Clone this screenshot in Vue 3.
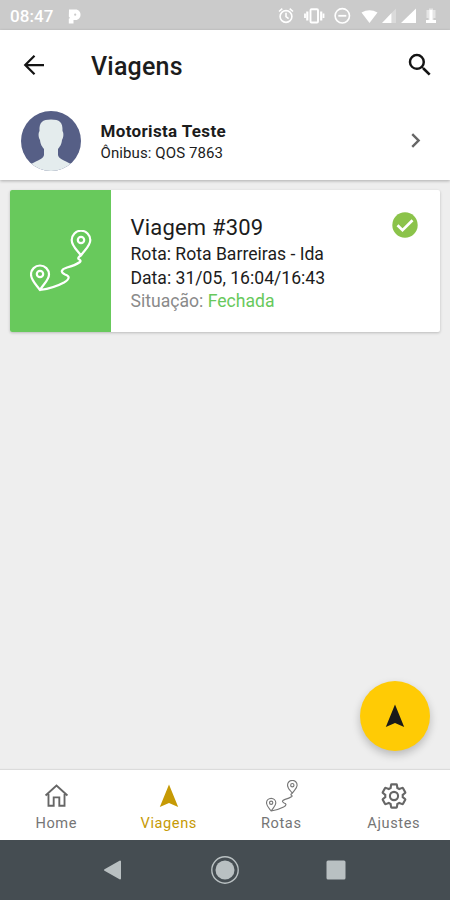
<template>
  <div class="screen">
    <div class="status-bar">
      <span class="clock">08:47</span>
      <svg class="parking" viewBox="0 0 13 15">
        <path fill-rule="evenodd" d="M1 .5H7.500C14.200 .5 14.200 11 7.500 11H5.500V14.500H.8V9.800L2 9L.8 7.500ZM7.200 4.600A1.100 1.100 0 1 0 7.200 6.800A1.100 1.100 0 1 0 7.200 4.600Z" />
      </svg>
      <svg class="status-icons" viewBox="0 0 180 30">
        <g fill="none" stroke="#fff" stroke-width="1.600">
          <circle cx="16" cy="16.500" r="5.900" />
          <path d="M16 12.800V16.700L18.600 18.600M9 11.500L12.300 8.700M23 11.500L19.700 8.700" />
          <rect x="40.500" y="9.200" width="7.500" height="13.300" rx="1" stroke-width="1.900" />
          <path d="M37.300 11.500V20.500M51.200 11.500V20.500" stroke-width="2.200" />
          <path d="M35 13.500V18M53.500 13.500V18" stroke-width="1.800" />
          <circle cx="72.300" cy="15.800" r="7.200" />
          <path d="M68.300 15.800H76.300" stroke-width="1.800" />
        </g>
        <g fill="#fff">
          <path d="M99.500 23L91.500 12.500Q99.500 8 107.500 12.500Z" />
          <path d="M112 23L121.500 13V23Z" />
          <path d="M121.500 13L126 8.500V23H121.500Z" opacity=".3" />
          <path d="M131 23L146 8.500V23Z" />
          <path d="M159 8.500H163V10H165.500V18H163.500V20H166V23H156V20H158.500V18H156.500V10H159Z" opacity=".5" />
          <path d="M159.500 10H162.500V20H166V23H156V20H159.500Z" />
        </g>
      </svg>
    </div>

    <header class="top">
      <div class="app-bar">
        <svg class="back" viewBox="0 0 24 24">
          <path d="M20 12H5.500M12.400 4.600L5 12L12.400 19.400" />
        </svg>
        <h1 class="page-title">Viagens</h1>
        <svg class="search" viewBox="0 0 24 24">
          <path d="M15.500 14h-.79l-.28-.27A6.471 6.471 0 0 0 16 9.500 6.500 6.500 0 1 0 9.500 16c1.610 0 3.090-.59 4.230-1.570l.27.28v.79l5 4.990L20.490 19l-4.990-5zm-6 0C7.010 14 5 11.990 5 9.500S7.010 5 9.500 5 14 7.010 14 9.500 11.990 14 9.500 14z" />
        </svg>
      </div>

      <div class="driver">
        <svg class="avatar" viewBox="0 0 60 60">
          <defs>
            <clipPath id="avatarClip"><circle cx="30" cy="30" r="30" /></clipPath>
          </defs>
          <g clip-path="url(#avatarClip)">
            <rect width="60" height="60" fill="#565f86" />
            <path fill="#e4eced" d="M30 8.500C21.500 8.500 18 11 18.500 20C17 22 17.500 27 19 29C19.500 34 21.500 36 23 38V44C22.500 48 17 49 10 53V60H50V53C43 49 37.500 48 37 44V38C38.500 36 40.500 34 41 29C42.500 27 43 22 41.500 20C42 11 38.500 8.500 30 8.500Z" />
          </g>
        </svg>
        <div class="driver-info">
          <strong class="driver-name">{{ driver.name }}</strong>
          <span class="driver-bus">Ônibus: {{ driver.bus }}</span>
        </div>
        <svg class="chevron" viewBox="0 0 24 24">
          <path d="M10 6L8.590 7.410 13.170 12l-4.580 4.590L10 18l6-6z" />
        </svg>
      </div>
    </header>

    <main class="content">
      <article class="trip">
        <div class="trip-thumb">
          <svg class="route" viewBox="0 0 62 62">
            <path d="M51 25.500C47 20 41.700 16 41.700 10A9.300 9.300 0 0 1 60.300 10C60.300 16 54.500 20 51 25.500ZM10 60C6 54.500 1 50 1 44.500A9 9 0 0 1 19 44.500C19 50 13.500 54 10 60ZM10 60Q24 58 34 52.500C40 49 40 46 35 44.500C30 42 31 39.500 37 37.500Q45 35.500 50 32Q51.500 30.500 48.500 29Q47.500 27.500 51 25.500" />
            <circle cx="51" cy="10" r="3.200" />
            <circle cx="10" cy="44" r="3.200" />
          </svg>
        </div>
        <div class="trip-info">
          <h2 class="trip-title">Viagem #{{ trip.id }}</h2>
          <p class="route-name">Rota: {{ trip.route }}</p>
          <p class="date">Data: {{ trip.date }}</p>
          <p class="situation">Situação: <span class="closed">{{ trip.status }}</span></p>
        </div>
        <svg class="check" viewBox="0 0 26 26">
          <circle cx="13" cy="13" r="12.700" fill="#8bc34a" />
          <path d="M5.500 13.300L10.500 18.200L20.500 8.200" fill="none" stroke="#fff" stroke-width="2.700" />
        </svg>
      </article>

      <button class="fab" aria-label="Iniciar viagem">
        <svg viewBox="0 0 20 24"><path d="M10 .5L19.200 23L10 19L.8 23Z" /></svg>
      </button>
    </main>

    <nav class="tabs">
      <a v-for="tab in tabs" :key="tab.name" class="tab" :class="{ active: tab.name === 'Viagens' }">
        <span class="tab-icon">
          <svg v-if="tab.icon === 'home'" class="home" viewBox="0 0 24 24">
            <path d="M1.500 12L12 2.500L22.500 12M4.300 10.500V21.800H9.300V13.800H14.700V21.800H19.700V10.500" />
          </svg>
          <svg v-else-if="tab.icon === 'arrow'" class="arrow" viewBox="0 0 20 24">
            <path d="M10 .5L19.200 23L10 19L.8 23Z" />
          </svg>
          <svg v-else-if="tab.icon === 'route'" class="route small" viewBox="0 0 62 62">
            <path d="M51 25.500C47 20 41.700 16 41.700 10A9.300 9.300 0 0 1 60.300 10C60.300 16 54.500 20 51 25.500ZM10 60C6 54.500 1 50 1 44.500A9 9 0 0 1 19 44.500C19 50 13.500 54 10 60ZM10 60Q24 58 34 52.500C40 49 40 46 35 44.500C30 42 31 39.500 37 37.500Q45 35.500 50 32Q51.500 30.500 48.500 29Q47.500 27.500 51 25.500" />
            <circle cx="51" cy="10" r="3.200" />
            <circle cx="10" cy="44" r="3.200" />
          </svg>
          <svg v-else class="gear" viewBox="0 0 24 24">
            <path d="M19.430 12.980c.04-.32.07-.64.07-.98s-.03-.66-.07-.98l2.110-1.650c.19-.15.24-.42.12-.64l-2-3.460c-.12-.22-.39-.3-.61-.22l-2.490 1c-.52-.4-1.080-.73-1.690-.98l-.38-2.650A.488.488 0 0 0 14 2h-4c-.25 0-.46.18-.49.42l-.38 2.650c-.61.25-1.170.59-1.690.98l-2.490-1c-.23-.09-.49 0-.61.22l-2 3.460c-.13.22-.07.49.12.64l2.110 1.650c-.04.32-.07.65-.07.98s.03.66.07.98l-2.110 1.650c-.19.15-.24.42-.12.64l2 3.460c.12.22.39.3.61.22l2.490-1c.52.4 1.080.73 1.690.98l.38 2.650c.03.24.24.42.49.42h4c.25 0 .46-.18.49-.42l.38-2.650c.61-.25 1.170-.59 1.690-.98l2.490 1c.23.09.49 0 .61-.22l2-3.460c.12-.22.07-.49-.12-.64z" />
            <circle cx="12" cy="12" r="3.500" />
          </svg>
        </span>
        <span class="tab-label">{{ tab.name }}</span>
      </a>
    </nav>

    <div class="system-nav">
      <svg viewBox="0 0 30 30">
        <path d="M6 15L21 6.500V23.500Z" stroke="#b9c0c2" stroke-width="2" stroke-linejoin="round" />
      </svg>
      <svg viewBox="0 0 30 30">
        <circle cx="15" cy="15" r="13.200" fill="none" stroke="#b9c0c2" stroke-width="1.400" />
        <circle cx="15" cy="15" r="9.500" />
      </svg>
      <svg viewBox="0 0 30 30"><rect x="5.500" y="5.500" width="19" height="19" rx="1.500" /></svg>
    </div>
  </div>
</template>

<script setup>
const driver = { name: 'Motorista Teste', bus: 'QOS 7863' }

const trip = {
  id: 309,
  route: 'Rota Barreiras - Ida',
  date: '31/05, 16:04/16:43',
  status: 'Fechada',
}

const tabs = [
  { name: 'Home', icon: 'home' },
  { name: 'Viagens', icon: 'arrow' },
  { name: 'Rotas', icon: 'route' },
  { name: 'Ajustes', icon: 'gear' },
]
</script>

<style>
body {
  margin: 0;
}
</style>

<style scoped>
.screen {
  width: 450px;
  height: 900px;
  display: flex;
  flex-direction: column;
  background: #eee;
  color: #1c1c1c;
  font-family: Roboto, sans-serif;
  overflow: hidden;
}

svg {
  display: block;
  flex-shrink: 0;
}

h1,
h2,
p {
  margin: 0;
  font-weight: 400;
}

.status-bar {
  height: 30px;
  flex-shrink: 0;
  display: flex;
  align-items: center;
  background: #cbcbcb;
  color: #fff;
}

.clock {
  width: 58px;
  padding-left: 10px;
  font-size: 17px;
  font-weight: 500;
  line-height: 30px;
  letter-spacing: 0.1px;
  padding-top: 2px;
}

.parking {
  width: 13px;
  height: 15px;
  margin-top: 2px;
  fill: #fff;
}

.status-icons {
  width: 180px;
  height: 30px;
  margin-left: auto;
}

.top {
  height: 150px;
  flex-shrink: 0;
  background: #fff;
  box-shadow: 0 1px 3px rgba(0, 0, 0, 0.28);
  z-index: 1;
}

.app-bar {
  height: 70px;
  display: flex;
  align-items: center;
  padding: 0 15px 0 19px;
}

.back,
.search {
  width: 30px;
  height: 30px;
  fill: #141414;
}

.back {
  fill: none;
  stroke: #141414;
  stroke-width: 1.8;
}

.page-title {
  margin-left: 42px;
  padding-top: 2px;
  font-size: 25px;
  font-weight: 500;
  letter-spacing: 0.2px;
}

.search {
  margin-left: auto;
}

.driver {
  height: 80px;
  display: flex;
  align-items: center;
  padding: 0 20px;
}

.avatar {
  width: 60px;
  height: 60px;
  margin-top: 1px;
  margin-left: 0.5px;
}

.driver-info {
  display: flex;
  flex-direction: column;
  margin-left: 20px;
  padding-top: 4px;
}

.driver-name {
  font-size: 17px;
  line-height: 22px;
  font-weight: 700;
  letter-spacing: 0.35px;
}

.driver-bus {
  font-size: 15px;
  line-height: 22px;
  letter-spacing: 0.1px;
}

.chevron {
  width: 29px;
  height: 29px;
  margin-left: auto;
  fill: #666;
}

.content {
  flex: 1;
  position: relative;
  padding: 10px;
}

.trip {
  height: 142px;
  display: flex;
  background: #fff;
  border-radius: 2px;
  box-shadow: 0 1px 3px rgba(0, 0, 0, 0.22);
}

.trip-thumb {
  width: 101px;
  display: flex;
  align-items: center;
  justify-content: center;
  background: #68c95c;
  border-radius: 2px 0 0 2px;
}

.route {
  width: 62px;
  height: 62px;
  fill: none;
  stroke: #fff;
  stroke-width: 2.2;
  stroke-linejoin: round;
}

.trip-info {
  flex: 1;
  padding: 22px 0 0 19.5px;
  font-size: 17.6px;
}

.trip-title {
  font-size: 22px;
  line-height: 31px;
  letter-spacing: 0.2px;
}

.trip-info p {
  line-height: 23.7px;
}

.situation {
  color: #8a8a8a;
}

.closed {
  color: #68c95c;
}

.check {
  width: 26px;
  height: 26px;
  margin: 22px 22px 0 0;
}

/* floats above the trip list */
.fab {
  position: absolute;
  right: 20px;
  bottom: 19px;
  width: 70px;
  height: 70px;
  padding: 0;
  border: none;
  border-radius: 50%;
  background: #ffcb05;
  display: flex;
  align-items: center;
  justify-content: center;
  box-shadow: 0 4px 8px rgba(0, 0, 0, 0.22);
}

.fab svg {
  width: 20px;
  height: 24px;
  fill: #1a1a1a;
}

.tabs {
  height: 70px;
  flex-shrink: 0;
  display: flex;
  background: #fff;
  box-shadow: 0 -1px 1px rgba(0, 0, 0, 0.08);
}

.tab {
  flex: 1;
  display: flex;
  flex-direction: column;
  align-items: center;
  color: #757575;
}

.tab.active {
  color: #c69a05;
}

.tab-icon {
  height: 43px;
  display: flex;
  align-items: center;
  padding-top: 8px;
  box-sizing: border-box;
}

.home,
.gear {
  fill: none;
  stroke: #666;
  stroke-width: 1.8;
}

.home {
  width: 25px;
  height: 25px;
}

.gear {
  width: 28px;
  height: 28px;
}

.arrow {
  width: 20px;
  height: 24px;
  fill: #c69a05;
}

.route.small {
  width: 32px;
  height: 32px;
  margin-left: 2px;
  stroke: #777;
}

.tab-label {
  font-size: 14.6px;
  line-height: 20px;
  letter-spacing: 0.6px;
}

.system-nav {
  height: 60px;
  flex-shrink: 0;
  display: flex;
  align-items: center;
  justify-content: center;
  gap: 81px;
  background: #454d52;
}

.system-nav svg {
  width: 30px;
  height: 30px;
  fill: #b9c0c2;
}
</style>
